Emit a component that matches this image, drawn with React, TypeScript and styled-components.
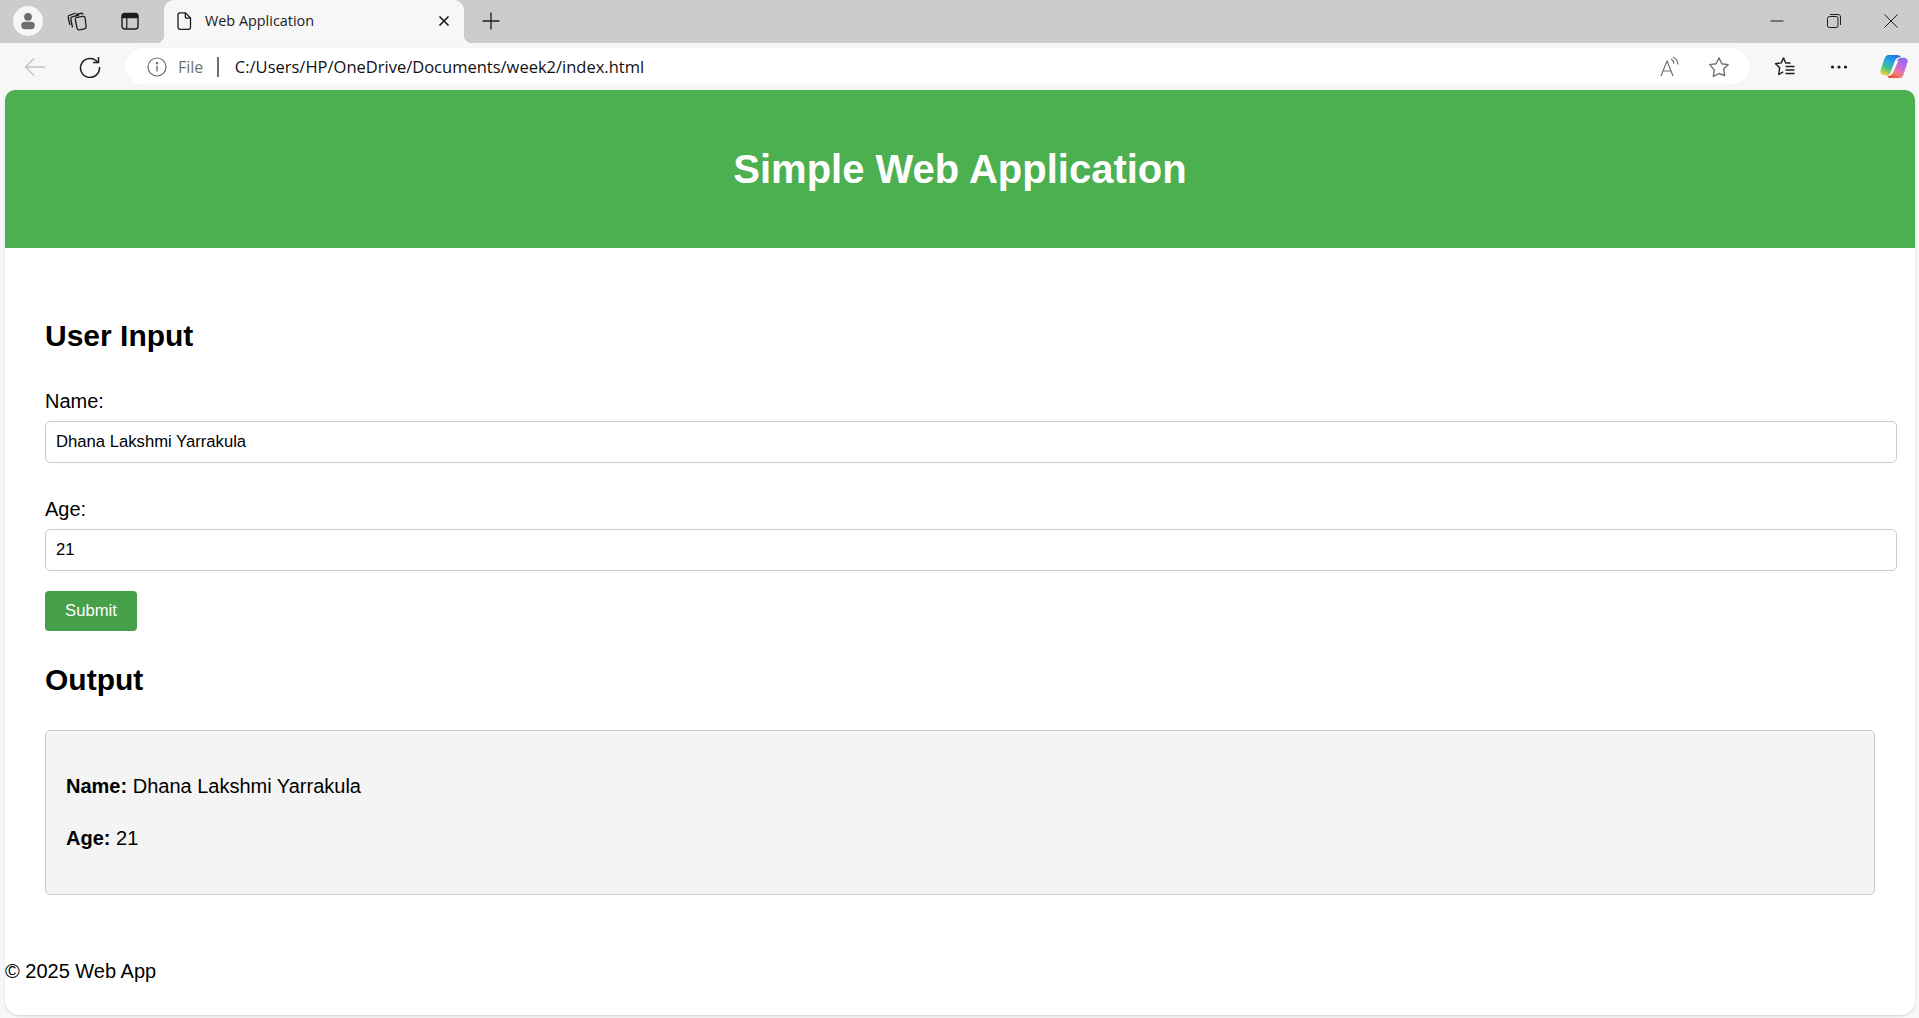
import React from 'react';
import styled, { createGlobalStyle } from 'styled-components';

const GlobalStyle = createGlobalStyle`
  html, body {
    margin: 0;
    padding: 0;
    height: 100%;
    overflow: hidden;
  }

  body {
    background: #f7f7f7;
    font-family: 'Liberation Sans', Arial, sans-serif;
  }

  * {
    box-sizing: content-box;
  }
`;

const Window = styled.div`
  width: 1919px;
  height: 1018px;
  display: flex;
  flex-direction: column;
  background: #f7f7f7;
`;

const TabStrip = styled.div`
  height: 43px;
  flex: none;
  background: #cccccc;
  display: flex;
  align-items: flex-start;
  padding-left: 13px;
`;

const StripButton = styled.div<{ $width: number }>`
  width: ${p => p.$width}px;
  height: 42px;
  flex: none;
  display: flex;
  align-items: center;
  justify-content: center;
`;

const Avatar = styled.div`
  width: 30px;
  height: 30px;
  margin-top: 6px;
  flex: none;
  border-radius: 50%;
  background: #f7f7f7;
  display: flex;
  align-items: center;
  justify-content: center;
`;

const Tab = styled.div`
  position: relative;
  width: 300px;
  height: 42px;
  padding-bottom: 1px;
  flex: none;
  margin-left: 15px;
  background: #f7f7f7;
  border-radius: 10px 10px 0 0;
  display: flex;
  align-items: center;
  font-family: 'Open Sans', sans-serif;
  font-size: 14.4px;
  color: #1a1a1a;

  &::before,
  &::after {
    content: '';
    position: absolute;
    bottom: 0;
    width: 8px;
    height: 8px;
    background: radial-gradient(circle at 0 0, #cccccc 8px, #f7f7f7 8.5px);
  }

  &::before {
    left: -8px;
  }

  &::after {
    right: -8px;
    background: radial-gradient(circle at 100% 0, #cccccc 8px, #f7f7f7 8.5px);
  }
`;

const TabIcon = styled.div`
  width: 20px;
  height: 20px;
  margin-left: 10px;
  flex: none;
  display: flex;
`;

const TabTitle = styled.div`
  margin: 0 0 2px 11px;
  flex: 1;
  white-space: nowrap;
`;

const TabClose = styled.div`
  width: 14px;
  height: 14px;
  margin-right: 13px;
  flex: none;
  display: flex;
`;

const WindowControls = styled.div`
  margin-left: auto;
  display: flex;
  align-items: center;
`;

const WindowButton = styled.div`
  width: 57px;
  height: 42px;
  display: flex;
  align-items: center;
  justify-content: center;
`;

const Toolbar = styled.div`
  height: 47px;
  flex: none;
  display: flex;
  align-items: center;
  background: #f7f7f7;
`;

const NavButton = styled.div<{ $width: number }>`
  width: ${p => p.$width}px;
  height: 37px;
  flex: none;
  display: flex;
  align-items: center;
  justify-content: center;
`;

const AddressBar = styled.div`
  width: 1625px;
  height: 37px;
  flex: none;
  background: #ffffff;
  border-radius: 19px;
  display: flex;
  align-items: center;
  box-shadow: 0 0 2px rgba(0, 0, 0, 0.06);
`;

const InfoIcon = styled.div`
  width: 20px;
  height: 20px;
  margin-left: 22px;
  display: flex;
`;

const Scheme = styled.span`
  margin-left: 11px;
  font-family: 'Open Sans', sans-serif;
  font-size: 16px;
  color: #707070;
`;

const Divider = styled.span`
  width: 1.5px;
  height: 20px;
  margin-left: 14px;
  background: #6f6f6f;
`;

const Url = styled.span`
  margin-left: 16px;
  font-family: 'Open Sans', sans-serif;
  font-size: 16.5px;
  color: #111111;
  white-space: nowrap;
`;

const AddressActions = styled.div`
  margin-left: auto;
  display: flex;
  align-items: center;
  gap: 28px;
  margin-right: 20px;
`;

const ToolbarActions = styled.div`
  flex: 1;
  display: flex;
  align-items: center;
`;

const ToolbarAction = styled.div<{ $width: number }>`
  width: ${p => p.$width}px;
  flex: none;
  display: flex;
  align-items: center;
  justify-content: center;
`;

const Page = styled.div`
  width: 1910px;
  height: 925px;
  margin-left: 5px;
  background: #ffffff;
  border-radius: 10px 10px 14px 14px;
  box-shadow: 0 1px 2px rgba(0, 0, 0, 0.16);
  overflow: hidden;
`;

const Header = styled.header`
  background: #4caf50;
  color: #ffffff;
  text-align: center;
  padding: 56px 0;
  height: 46px;
`;

const Title = styled.h1`
  margin: 0;
  font-size: 40px;
  line-height: 46px;
  font-weight: 700;
`;

const Main = styled.main`
  padding: 0 40px;
`;

const SectionTitle = styled.h2<{ $top: number }>`
  margin: ${p => p.$top}px 0 0;
  font-size: 30px;
  line-height: 34px;
  font-weight: 700;
  color: #000000;
`;

const Form = styled.form`
  margin-top: 37px;
`;

const Label = styled.label`
  display: block;
  font-size: 20px;
  line-height: 23px;
  color: #000000;
`;

const Field = styled.input`
  display: block;
  width: 100%;
  height: 20px;
  margin: 8px 0 0;
  padding: 10px;
  border: 1px solid #cccccc;
  border-radius: 5px;
  background: #ffffff;
  font-family: 'Liberation Sans', Arial, sans-serif;
  font-size: 16.67px;
  color: #000000;
  outline: none;
`;

const Group = styled.div`
  margin-bottom: 35px;

  &:last-of-type {
    margin-bottom: 20px;
  }
`;

const Submit = styled.button`
  display: block;
  width: 92px;
  height: 40px;
  padding: 0;
  border: none;
  border-radius: 4px;
  background: #45a049;
  color: #ffffff;
  font-family: 'Liberation Sans', Arial, sans-serif;
  font-size: 16.67px;
`;

const OutputBox = styled.div`
  margin-top: 33px;
  padding: 20px;
  height: 123px;
  border: 1px solid #cccccc;
  border-radius: 5px;
  background: #f4f4f4;
`;

const OutputLine = styled.p<{ $top: number }>`
  margin: ${p => p.$top}px 0 0;
  font-size: 20px;
  line-height: 23px;
  color: #000000;
`;

const Footer = styled.footer`
  margin-top: 65px;
  font-size: 20px;
  line-height: 23px;
  color: #000000;
`;

const Copilot = () => (
  <svg width="32" height="29" viewBox="0 0 30 30" preserveAspectRatio="none">
    <defs>
      <linearGradient id="cpA" x1="0.7" y1="0" x2="0.2" y2="1">
        <stop offset="0" stopColor="#1f6fe0" />
        <stop offset="0.35" stopColor="#24a8e0" />
        <stop offset="0.65" stopColor="#3cc48a" />
        <stop offset="1" stopColor="#f2d23c" />
      </linearGradient>
      <linearGradient id="cpB" x1="0.7" y1="0" x2="0.25" y2="1">
        <stop offset="0" stopColor="#8f6df0" />
        <stop offset="0.45" stopColor="#d06ed6" />
        <stop offset="0.75" stopColor="#f47a7a" />
        <stop offset="1" stopColor="#ee4a38" />
      </linearGradient>
    </defs>
    <path
      d="M10 3h8c1.800 0 2.800.8 3.400 2.400-2.400-.4-4.400.6-5.200 3L12 21c-.7 2-2 3-4 3H6C3 24 1.500 21.500 2.500 18.500L6 7c.8-2.600 2-4 4-4z"
      fill="url(#cpA)"
    />
    <path
      d="M20 27h-8c-1.800 0-2.800-.8-3.400-2.400 2.400.4 4.400-.6 5.200-3L18 9c.7-2 2-3 4-3h2c3 0 4.500 2.500 3.500 5.500L24 23c-.8 2.600-2 4-4 4z"
      fill="url(#cpB)"
    />
    <path d="M16.500 9.500 19 9 14 21.500l-2.500.5z" fill="#ffffff" />
  </svg>
);

export default function App() {
  return (
    <Window>
      <GlobalStyle />
      <TabStrip>
        <Avatar>
          <svg width="20" height="20" viewBox="0 0 20 20" fill="#6e6e6e">
            <circle cx="10" cy="5.800" r="3.900" />
            <rect x="3.200" y="10.800" width="13.600" height="7.400" rx="3.700" />
          </svg>
        </Avatar>
        <StripButton $width={68}>
          <svg width="22" height="22" viewBox="0 0 22 22" fill="none" stroke="#1c1c1c" strokeWidth="1.300">
            <path d="M10 4.500 15 3.300c1-.2 1.900.3 2.200 1.300" />
            <path d="M6.500 17.500 4.800 9c-.2-1 .3-1.900 1.300-2.200L13 5" />
            <path d="M4 15 2.200 7.500c-.2-1 .3-1.900 1.200-2.200L9.500 3" />
            <path d="M9.300 9.300c-.1-1 .5-1.800 1.500-2l6.200-1c1.100-.1 2 .5 2.100 1.500l1 9c.1 1-.5 1.800-1.500 2l-5.300 1c-1 .2-1.900-.4-2.200-1.400z" />
          </svg>
        </StripButton>
        <StripButton $width={38}>
          <svg width="20" height="20" viewBox="0 0 20 20" fill="none" stroke="#1c1c1c" strokeWidth="1.400">
            <rect x="2" y="2.500" width="16" height="15.500" rx="2.800" />
            <path d="M2.500 4.200c0-.6.4-1 1-1h13c.6 0 1 .4 1 1v2.300h-15z" fill="#1c1c1c" />
            <path d="M6.800 6.500v11" strokeWidth="1.200" />
          </svg>
        </StripButton>
        <Tab>
          <TabIcon>
            <svg width="20" height="20" viewBox="0 0 20 20" fill="none" stroke="#1a1a1a" strokeWidth="1.300">
              <path d="M4 4c0-1.400.8-2.200 2.200-2.200h5.300L16.500 7v9c0 1.400-.8 2.300-2.200 2.300H6.200C4.800 18.300 4 17.400 4 16z" />
              <path d="M11.300 2v3.600c0 1 .6 1.600 1.600 1.600h3.500" />
            </svg>
          </TabIcon>
          <TabTitle>Web Application</TabTitle>
          <TabClose>
            <svg width="14" height="14" viewBox="0 0 14 14" stroke="#1a1a1a" strokeWidth="1.600">
              <path d="M2.500 2.500l9 9M11.500 2.500l-9 9" />
            </svg>
          </TabClose>
        </Tab>
        <StripButton $width={54}>
          <svg width="18" height="18" viewBox="0 0 18 18" stroke="#1c1c1c" strokeWidth="1.300">
            <path d="M9 .5v17M.5 9h17" />
          </svg>
        </StripButton>
        <WindowControls>
          <WindowButton>
            <svg width="14" height="14" viewBox="0 0 14 14" stroke="#1c1c1c" strokeWidth="1">
              <path d="M0.500 7h13" />
            </svg>
          </WindowButton>
          <WindowButton>
            <svg width="14" height="14" viewBox="0 0 14 14" fill="none" stroke="#1c1c1c" strokeWidth="1">
              <rect x="0.500" y="2.500" width="10.500" height="11" rx="1.800" />
              <path d="M3 .5h8c1.500 0 2.500 1 2.500 2.500v8" />
            </svg>
          </WindowButton>
          <WindowButton>
            <svg width="14" height="14" viewBox="0 0 14 14" stroke="#1c1c1c" strokeWidth="1">
              <path d="M.5.5l13 13M13.500.5l-13 13" />
            </svg>
          </WindowButton>
        </WindowControls>
      </TabStrip>

      <Toolbar>
        <NavButton $width={70}>
          <svg width="22" height="22" viewBox="0 0 22 22" fill="none" stroke="#c4c4c4" strokeWidth="1.400">
            <path d="M21 11H1.500M10 2.500 1.500 11l8.500 8.500" />
          </svg>
        </NavButton>
        <NavButton $width={40}>
          <svg width="22" height="22" viewBox="0 0 22 22" fill="none" stroke="#1c1c1c" strokeWidth="1.500">
            <path d="M18.500 6A9.500 9.500 0 1 0 20.500 11" />
            <path d="M19.500 1v5.500H14" />
          </svg>
        </NavButton>
        <NavButton $width={15} />
        <AddressBar>
          <InfoIcon>
            <svg width="20" height="20" viewBox="0 0 20 20" fill="none" stroke="#6e6e6e" strokeWidth="1.200">
              <circle cx="10" cy="10" r="9" />
              <path d="M10 9v5.500" strokeWidth="1.400" />
              <circle cx="10" cy="6.300" r=".7" fill="#6e6e6e" />
            </svg>
          </InfoIcon>
          <Scheme>File</Scheme>
          <Divider />
          <Url>C:/Users/HP/OneDrive/Documents/week2/index.html</Url>
          <AddressActions>
            <svg width="20" height="22" viewBox="0 0 20 22" fill="none" stroke="#707070" strokeWidth="1.200">
              <path d="M1 20 7 5l6 15M3 15h8" />
              <path d="M11 3c1.800.9 2.900 2.400 3 4.500M13 1c2.700 1.300 4.700 3.800 5 7.500" />
            </svg>
            <svg width="22" height="22" viewBox="0 0 22 22" fill="none" stroke="#707070" strokeWidth="1.400">
              <path d="M11 1.800l2.800 5.900 6.400.9-4.600 4.500 1.100 6.400L11 17.500l-5.700 3 1.100-6.400L1.800 8.600l6.400-.9z" strokeLinejoin="round" />
            </svg>
          </AddressActions>
        </AddressBar>
        <ToolbarActions>
          <ToolbarAction $width={70}>
            <svg width="22" height="22" viewBox="0 0 22 22" fill="none" stroke="#1c1c1c" strokeWidth="1.400">
              <path d="M9.500 1.800 11.700 7h4.800M9.500 1.800 7.300 6.900 1.500 7.700l4.200 4-1 6.800 4.500-2.600" strokeLinejoin="round" />
              <path d="M11.500 10.500h9M11.500 14h9M11.500 17.500h9" />
            </svg>
          </ToolbarAction>
          <ToolbarAction $width={38}>
            <svg width="18" height="6" viewBox="0 0 18 6" fill="#1c1c1c">
              <circle cx="2.500" cy="3" r="1.600" />
              <circle cx="9" cy="3" r="1.600" />
              <circle cx="15.500" cy="3" r="1.600" />
            </svg>
          </ToolbarAction>
          <ToolbarAction $width={72}>
            <Copilot />
          </ToolbarAction>
        </ToolbarActions>
      </Toolbar>

      <Page>
        <Header>
          <Title>Simple Web Application</Title>
        </Header>
        <Main>
          <SectionTitle $top={71}>User Input</SectionTitle>
          <Form>
            <Group>
              <Label htmlFor="name">Name:</Label>
              <Field id="name" type="text" defaultValue="Dhana Lakshmi Yarrakula" readOnly />
            </Group>
            <Group>
              <Label htmlFor="age">Age:</Label>
              <Field id="age" type="text" defaultValue="21" readOnly />
            </Group>
            <Submit type="button">Submit</Submit>
          </Form>
          <SectionTitle $top={32}>Output</SectionTitle>
          <OutputBox>
            <OutputLine $top={24}>
              <strong>Name:</strong> Dhana Lakshmi Yarrakula
            </OutputLine>
            <OutputLine $top={29}>
              <strong>Age:</strong> 21
            </OutputLine>
          </OutputBox>
        </Main>
        <Footer>© 2025 Web App</Footer>
      </Page>
    </Window>
  );
}
